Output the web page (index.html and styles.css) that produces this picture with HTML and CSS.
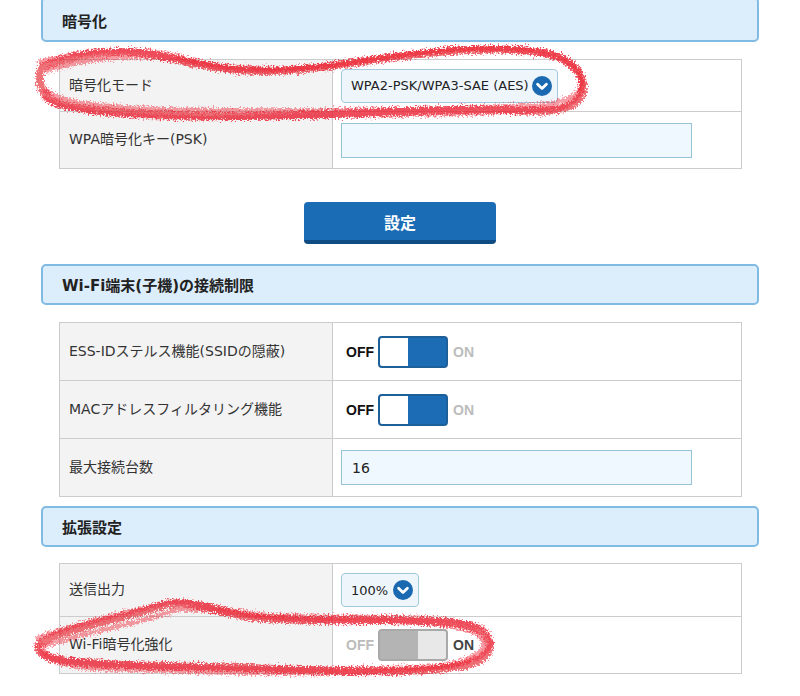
FILE: index.html
```html
<!DOCTYPE html>
<html lang="ja">
<head>
<meta charset="utf-8">
<title>Wi-Fi設定</title>
<link rel="stylesheet" href="styles.css">
</head>
<body>
<div class="page">
  <div class="sec-head first">暗号化</div>
  <table class="grid">
    <tr class="h52">
      <td class="lbl">暗号化モード</td>
      <td class="val">
        <div class="select wide"><span>WPA2-PSK/WPA3-SAE (AES)</span><span class="chev"><svg viewBox="0 0 20 20" width="20" height="20"><circle cx="10" cy="10" r="10" fill="#1b69b0"/><path d="M5.6 8.2 L10 12.4 L14.4 8.2" fill="none" stroke="#fff" stroke-width="2.8" stroke-linecap="round" stroke-linejoin="round"/></svg></span></div>
      </td>
    </tr>
    <tr class="h57">
      <td class="lbl">WPA暗号化キー(PSK)</td>
      <td class="val"><div class="input"></div></td>
    </tr>
  </table>

  <div class="btn-wrap"><div class="btn">設定</div></div>

  <div class="sec-head">Wi-Fi端末(子機)の接続制限</div>
  <table class="grid">
    <tr class="h58">
      <td class="lbl">ESS-IDステルス機能(SSIDの隠蔽)</td>
      <td class="val">
        <div class="toggle"><span class="tl on-state">OFF</span><span class="track blue"><span class="knob"></span><span class="fill"></span></span><span class="tl dim">ON</span></div>
      </td>
    </tr>
    <tr class="h58">
      <td class="lbl">MACアドレスフィルタリング機能</td>
      <td class="val">
        <div class="toggle"><span class="tl on-state">OFF</span><span class="track blue"><span class="knob"></span><span class="fill"></span></span><span class="tl dim">ON</span></div>
      </td>
    </tr>
    <tr class="h58">
      <td class="lbl">最大接続台数</td>
      <td class="val"><div class="input"><span>16</span></div></td>
    </tr>
  </table>

  <div class="sec-head third">拡張設定</div>
  <table class="grid last">
    <tr class="h53">
      <td class="lbl">送信出力</td>
      <td class="val">
        <div class="select"><span>100%</span><span class="chev"><svg viewBox="0 0 20 20" width="20" height="20"><circle cx="10" cy="10" r="10" fill="#1b69b0"/><path d="M5.6 8.2 L10 12.4 L14.4 8.2" fill="none" stroke="#fff" stroke-width="2.8" stroke-linecap="round" stroke-linejoin="round"/></svg></span></div>
      </td>
    </tr>
    <tr class="h57">
      <td class="lbl">Wi-Fi暗号化強化</td>
      <td class="val">
        <div class="toggle"><span class="tl dim">OFF</span><span class="track gray"><span class="fill"></span><span class="knob"></span></span><span class="tl on-dark">ON</span></div>
      </td>
    </tr>
  </table>
</div>

<svg class="scribble" width="800" height="696" viewBox="0 0 800 696">
  <defs>
    <filter id="rough" x="-10%" y="-20%" width="120%" height="140%">
      <feTurbulence type="fractalNoise" baseFrequency="0.6" numOctaves="3" seed="7" result="n"/>
      <feDisplacementMap in="SourceGraphic" in2="n" scale="9" xChannelSelector="R" yChannelSelector="G"/>
    </filter>
  </defs>
  <g filter="url(#rough)" fill="none" stroke-linecap="round" stroke-linejoin="round">
    <path class="ink" d="M44 66 C 90 48, 140 50, 170 58 C 220 70, 260 76, 330 66 C 400 56, 470 44, 540 52 C 575 58, 590 80, 580 98 C 570 112, 545 112, 510 110 C 430 108, 340 116, 240 116 C 160 116, 90 112, 60 104 C 38 96, 36 76, 44 66 Z"/>
    <path class="ink thin" d="M48 70 C 110 52, 160 54, 210 66 C 280 80, 350 60, 430 52 C 500 46, 560 48, 578 72 C 590 92, 570 106, 520 106 C 420 110, 300 112, 180 110 C 110 108, 60 104, 46 90"/>
    <path class="ink thin" d="M40 62 C 80 50, 150 46, 190 60 C 250 74, 320 70, 380 58 C 450 48, 520 42, 560 56 C 588 70, 592 96, 560 108 C 480 116, 360 114, 220 118 C 140 118, 70 114, 44 98"/>
    <path class="ink" d="M42 642 C 70 626, 120 620, 160 606 C 190 598, 205 610, 250 617 C 320 624, 400 616, 460 624 C 495 630, 500 655, 470 664 C 430 674, 350 672, 250 668 C 170 666, 100 666, 60 660 C 38 656, 34 648, 42 642 Z"/>
    <path class="ink thin" d="M46 646 C 90 630, 140 624, 175 610 C 210 606, 240 618, 300 620 C 370 622, 430 618, 475 632 C 495 645, 480 660, 440 666 C 360 672, 220 668, 110 664 C 70 662, 44 656, 44 650"/>
    <path class="ink thin" d="M38 638 C 80 622, 130 612, 168 602 C 200 600, 230 614, 280 616 C 360 620, 440 612, 482 628 C 502 644, 490 664, 420 670 C 330 676, 190 672, 90 668 C 50 664, 36 654, 40 644"/>
  </g>
</svg>
</body>
</html>
```
FILE: styles.css
```css
* { box-sizing: border-box; }
html, body { margin: 0; padding: 0; background: #ffffff; }
body {
  width: 800px;
  height: 696px;
  overflow: hidden;
  position: relative;
  font-family: "DejaVu Sans", "Noto Sans CJK JP", sans-serif;
  color: #333333;
}
.page { padding-left: 41px; width: 759px; }

.sec-head {
  width: 718px;
  height: 41px;
  border: 2px solid #7fbbe3;
  border-radius: 5px;
  background: #dcedfc;
  padding-left: 19px;
  font-size: 15px;
  font-weight: 700;
  color: #222222;
  display: flex;
  align-items: center;
}
.sec-head.first { margin-top: -3px; height: 45px; padding-top: 2px; }
.sec-head.third { margin-top: 9px; }

.grid {
  border-collapse: collapse;
  margin-left: 18px;
  width: 683px;
  margin-top: 17px;
}
.grid.last { margin-top: 16px; }
.grid td { border: 1px solid #cccccc; padding: 0; }
.grid .lbl {
  width: 273px;
  background: #f3f3f3;
  padding-left: 9px;
  padding-bottom: 4px;
  font-size: 14px;
  color: #333333;
}
.grid .val { padding-left: 8px; background: #ffffff; }
.h52 { height: 52px; }
.h53 { height: 53px; }
.h57 { height: 57px; }
.h58 { height: 58px; }

.select {
  display: inline-flex;
  align-items: center;
  height: 34px;
  border: 1px solid #a6c8dc;
  border-radius: 4px;
  background: #eef6fc;
  padding: 0 5px 0 9px;
  font-size: 13px;
  color: #222222;
  vertical-align: middle;
}
.select.wide { width: 217px; }
.select .chev { display: inline-flex; margin-left: 5px; }
.select.wide .chev { margin-left: auto; }

.input {
  width: 351px;
  height: 35px;
  border: 1px solid #97c4d4;
  background: #eff8fe;
  display: flex;
  align-items: center;
  padding-left: 10px;
  font-size: 14px;
  color: #222222;
}

.toggle {
  display: inline-flex;
  align-items: center;
  margin-left: 5px;
  font-family: "Liberation Sans", Arial, sans-serif;
  font-weight: 700;
  font-size: 14px;
}
.tl { display: inline-block; }
.on-state { color: #111111; }
.on-dark { color: #444444; }
.dim { color: #bcbcbc; }
.track {
  display: inline-flex;
  width: 70px;
  height: 32px;
  border-radius: 4px;
  border: 2px solid;
  margin: 0 5px 0 4px;
  overflow: hidden;
}
.track.blue { border-color: #1d5f99; background: #1b6cb4; }
.track.blue .knob { width: 28px; background: #ffffff; }
.track.blue .fill { flex: 1; background: #1b6cb4; }
.track.gray { border-color: #a9a9a9; background: #b4b4b4; }
.track.gray .fill { flex: 1; background: #b4b4b4; }
.track.gray .knob { width: 28px; background: #e8e8e8; }

.btn-wrap { display: flex; justify-content: center; width: 718px; margin-top: 33px; margin-bottom: 20px; }
.btn {
  width: 192px;
  height: 42px;
  border-radius: 4px;
  background: #1a6cb5;
  border-bottom: 4px solid #0f4c84;
  color: #ffffff;
  font-family: "Noto Sans CJK JP", sans-serif;
  font-size: 16px;
  font-weight: 700;
  display: flex;
  align-items: center;
  justify-content: center;
  padding-top: 2px;
}

.scribble { position: absolute; left: 0; top: 0; pointer-events: none; }
.ink { stroke: rgba(228, 20, 34, 0.6); stroke-width: 8; }
.ink.thin { stroke: rgba(238, 36, 48, 0.45); stroke-width: 5; }
```
